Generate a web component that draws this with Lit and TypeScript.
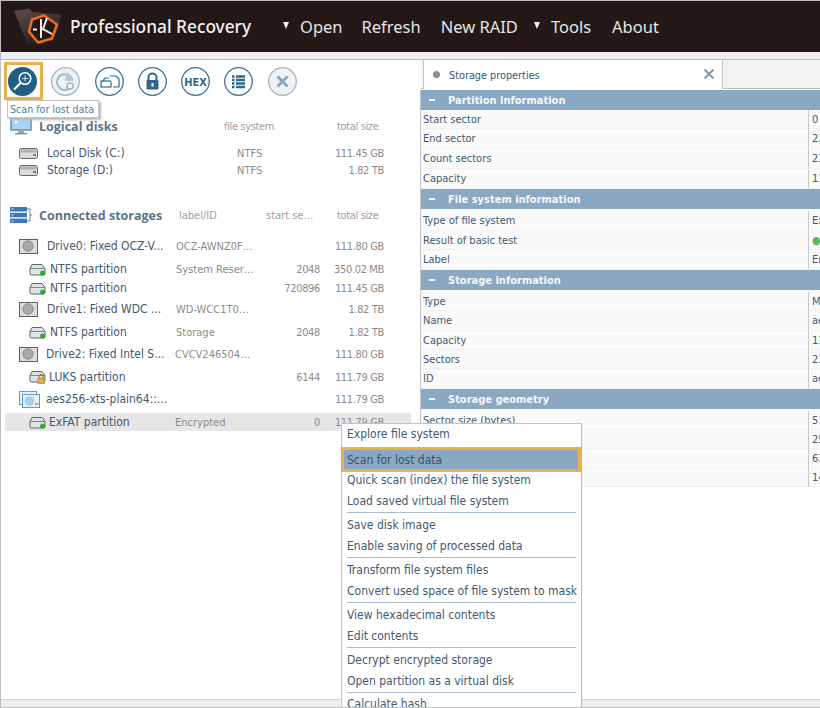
import { LitElement, html, css, svg } from "lit";
import { customElement } from "lit/decorators.js";

const hdd = svg`<svg width="19" height="11" viewBox="0 0 19 11"><rect x="0.5" y="0.5" width="18" height="10" rx="2" fill="#dcdcdc" stroke="#666"/><rect x="1.5" y="1.5" width="16" height="3" fill="#b0b0b0"/><rect x="14" y="6" width="3" height="2" fill="#22b14c"/></svg>`;
const drive = svg`<svg width="19" height="15" viewBox="0 0 19 15"><rect x="0.5" y="0.5" width="18" height="14" fill="#dcdcdc" stroke="#5f5f5f"/><circle cx="9" cy="7" r="5.2" fill="#a9a9a9" stroke="#8e8e8e"/></svg>`;
const part = svg`<svg width="17" height="13" viewBox="0 0 17 13"><path d="M3 1.5h10l3 4v5a1.5 1.5 0 0 1-1.500 1.500h-12a1.500 1.500 0 0 1-1.500-1.500v-5z" fill="#dfe3e6" stroke="#5e666c"/><rect x="1" y="5" width="15" height="1" fill="#7e868c"/><rect x="11.500" y="8" width="4" height="4" rx="1.500" fill="#16c60c" stroke="#0c7d08" stroke-width=".5"/></svg>`;
const lock = svg`<svg width="17" height="14" viewBox="0 0 17 14"><path d="M3 1.500h10l3 4v5a1.500 1.500 0 0 1-1.500 1.500h-12a1.500 1.500 0 0 1-1.500-1.500v-5z" fill="#dfe3e6" stroke="#5e666c"/><rect x="1" y="5" width="15" height="1" fill="#7e868c"/><path d="M10 8V6.500a2 2 0 0 1 4 0V8" fill="none" stroke="#8a6a30"/><rect x="8.500" y="8" width="7" height="6" rx="1" fill="#e0a94a" stroke="#9a7430" stroke-width=".5"/></svg>`;
const enc = svg`<svg width="21" height="17" viewBox="0 0 21 17"><rect x="0.500" y="0.500" width="17" height="13" fill="#e8f2fa" stroke="#5b9bd0"/><rect x="3.500" y="3.500" width="17" height="13" fill="#e8f2fa" stroke="#5b9bd0"/><circle cx="10.500" cy="10" r="4.800" fill="#a8d0ea"/><rect x="16" y="12" width="3.500" height="2" fill="#ef9a45"/></svg>`;

const icons: Record<string, unknown> = { hdd, drive, part, lock, enc };

const logical = [
  ["Local Disk (C:)", "NTFS", "111.45 GB", 8],
  ["Storage (D:)", "NTFS", "1.82 TB", -1],
];

const storages = [
  { k: "drive", n: "Drive0: Fixed OCZ-V...", l: "OCZ-AWNZ0F…", s: "", z: "111.80 GB", mt: 12 },
  { k: "part", n: "NTFS partition", l: "System Reser…", s: "2048", z: "350.02 MB", mt: 5 },
  { k: "part", n: "NTFS partition", l: "", s: "720896", z: "111.45 GB", mt: 1 },
  { k: "drive", n: "Drive1: Fixed WDC ...", l: "WD-WCC1T0…", s: "", z: "1.82 TB", mt: 3 },
  { k: "part", n: "NTFS partition", l: "Storage", s: "2048", z: "1.82 TB", mt: 5 },
  { k: "drive", n: "Drive2: Fixed Intel S...", l: "CVCV246504…", s: "", z: "111.80 GB", mt: 4, t: 1 },
  { k: "lock", n: "LUKS partition", l: "", s: "6144", z: "111.79 GB", mt: 5, t: 1 },
  { k: "enc", n: "aes256-xts-plain64::...", l: "", s: "", z: "111.79 GB", mt: 4, t: 1 },
  { k: "part", n: "ExFAT partition", l: "Encrypted", s: "0", z: "111.79 GB", mt: 5, t: 1, sel: 1 },
];

const sections: { t: string; h: number[]; p: number; rows: string[][] }[] = [
  { t: "Partition information", h: [19, 20, 20, 20], p: 0, rows: [["Start sector", "0"], ["End sector", "234420223"], ["Count sectors", "234420224"], ["Capacity", "111.79 GB"]] },
  { t: "File system information", h: [22, 19, 20], p: 2, rows: [["Type of file system", "ExFAT"], ["Result of basic test", "●"], ["Label", "Encrypted"]] },
  { t: "Storage information", h: [21, 20, 19, 19, 20], p: 2, rows: [["Type", "Mapped"], ["Name", "aes256"], ["Capacity", "111.79 GB"], ["Sectors", "234426368"], ["ID", "aes256"]] },
  { t: "Storage geometry", h: [21, 19, 19, 19], p: 2, rows: [["Sector size (bytes)", "512"], ["Sectors per track", "255"], ["Tracks per cylinder", "63"], ["Cylinders", "14592"]] },
];

const menu = [
  ["Explore file system"], ["Scan for lost data", "hi"], ["Quick scan (index) the file system"], ["Load saved virtual file system"], null,
  ["Save disk image"], ["Enable saving of processed data"], null,
  ["Transform file system files"], ["Convert used space of file system to mask"], null,
  ["View hexadecimal contents"], ["Edit contents"], null,
  ["Decrypt encrypted storage"], ["Open partition as a virtual disk"], null,
  ["Calculate hash"],
];

@customElement("app-root")
export class AppRoot extends LitElement {
  static styles = css`
    :host { display: block; width: 820px; height: 708px; position: relative; overflow: hidden; background: #fff;
      font-family: "DejaVu Sans Condensed", "Liberation Sans", sans-serif; font-size: 12px; color: #3f5a72; box-sizing: border-box; }
    .app { display: flex; flex-direction: column; height: 708px; box-sizing: border-box; border-top: 1px solid #bdbdbd; border-left: 1px solid #bdbdbd; }
    .header { height: 51px; flex: none; background: #231815; display: flex; align-items: center; position: relative; color: #e6e6e6; font-family: "Noto Sans", "Open Sans", sans-serif; font-size: 16.500px; }
    .logo { margin-left: 13px; flex: none; display: block; }
    .brand { margin-left: 6px; width: 197px; font-size: 17.300px; font-weight: 500; color: #f2f2f2; white-space: nowrap; }
    .nav { display: flex; align-items: center; white-space: nowrap; height: 100%; }
    .tri { width: 0; height: 0; border-left: 3.500px solid transparent; border-right: 3.500px solid transparent; border-top: 7px solid #f4f4f4; margin-top: -2px; }
    .strip { height: 7px; flex: none; background: #efefef; border-bottom: 1px solid #bcbcbc; }
    .body { flex: 1; display: flex; min-height: 0; }
    .left { width: 418px; flex: none; position: relative; }
    .toolbar { height: 56px; display: flex; align-items: flex-start; box-sizing: border-box; padding: 7px 0 0 7px; gap: 14.300px; position: relative; }
    .btn { width: 29px; height: 29px; flex: none; display: block; }
    .focus { position: absolute; left: 3px; top: 2px; width: 39px; height: 38px; box-sizing: border-box; border: 3px solid #e8b04e; }
    .tip { position: absolute; left: 6px; top: 40px; height: 18px; width: 92px; box-sizing: border-box; border: 1px solid #c4c4c4; background: #fff; color: #4a7ea3; font-size: 10.600px; line-height: 16px; padding-left: 2px; white-space: nowrap; box-shadow: 2px 2px 2px #bbb; z-index: 3; }
    .head { height: 20px; display: flex; align-items: center; position: relative; color: #a0a0a0; font-size: 11px; white-space: nowrap; }
    .head .ico { width: 38px; flex: none; padding-left: 9px; box-sizing: border-box; display: flex; }
    .head b { color: #5e7388; font-size: 12.500px; font-weight: bold; font-family: "Open Sans", "DejaVu Sans Condensed", sans-serif; }
    .sp { letter-spacing: -0.35px; }
    .row { display: grid; height: 18px; box-sizing: border-box; align-items: center; white-space: nowrap; margin-right: 8px; margin-left: 4px; }
    .row.st { grid-template-columns: 171px 86px 58px 64px; }
    .row.lg { grid-template-columns: 232px 60px 87px; }
    .row.sel { background: #e6e6e6; }
    .cell-n { display: flex; align-items: center; }
    .ic { flex: none; display: flex; justify-content: flex-start; }
    .n-drive .ic { margin-left: 14px; width: 28px; }
    .n-part .ic, .n-lock .ic { margin-left: 24px; width: 21px; }
    .n-enc .ic { margin-left: 14px; width: 28px; }
    .tight { margin-left: -1px; }
    .v { color: #8b8b8b; font-size: 11px; }
    .r { text-align: right; letter-spacing: -0.35px; }
    .right { flex: 1; min-width: 0; position: relative; overflow: hidden; }
    .tabs { height: 29px; display: flex; background: #f3f3f3; border-bottom: 1px solid #bcbcbc; box-sizing: border-box; margin-left: 2px; }
    .tab { width: 300px; height: 29px; margin-left: 2px; box-sizing: border-box; background: #fff; border: 1px solid #c4c4c4; border-top: 0; border-bottom: 0; display: flex; align-items: center; color: #2d5a80; font-size: 10.800px; padding: 1px 0 0 9px; position: relative; }
    .dot { width: 7px; height: 7px; border-radius: 50%; background: #8f8f8f; margin-right: 9px; margin-top: -1px; }
    .x { position: absolute; right: 7px; top: 8px; display: block; }
    .props { border-left: 1px solid #c4c4c4; margin-left: 1px; margin-top: 1px; }
    .sec { height: 20px; background: #8aa8c2; display: flex; align-items: center; color: #f5f8fb; font-weight: bold; font-size: 11px; white-space: nowrap; }
    .sec i { width: 6px; height: 2px; background: #f5f8fb; margin-left: 8px; margin-right: 13px; flex: none; }
    .pr { display: grid; grid-template-columns: 387px 1fr; background: #fafafa; border-bottom: 1px solid #f0f0f0; box-sizing: border-box; line-height: 19px; font-size: 11px; white-space: nowrap; }
    .pr span:first-child { padding-left: 2px; }
    .pr span:last-child { border-left: 1px solid #c8c8c8; padding-left: 3px; overflow: hidden; }
    .green { color: #5cb85c; }
    .foot { height: 9px; flex: none; background: #efefef; border-top: 1px solid #d4d4d4; border-bottom: 1px solid #c4c4c4; box-sizing: border-box; }
    .menu { position: absolute; left: 341px; top: 423px; width: 241px; height: 284px; box-sizing: border-box; background: #fff; border: 1px solid #c4c4c4; border-right: 1px solid #b8b8b8; border-bottom: 0; z-index: 5; padding-top: 1px; white-space: nowrap; clip-path: inset(0); }
    .mi { height: 21px; box-sizing: border-box; padding-top: 2px; line-height: 19px; padding-left: 5px; color: #3f5a72; }
    .mi:first-child { padding-top: 0; }
    .mi:last-child { padding-top: 1px; }
    .mi.hi { height: 25px; line-height: 21px; padding-top: 0; background: #8aa8c2; border: 3px solid #e8b04e; margin: 1px 0 -3px -1px; padding-left: 3px; position: relative; color: #34526b; }
    .sep { height: 1px; background: #a9bccd; margin: 1px 5px 1px 5px; }
  `;

  private btn(inner: unknown, off = false) {
    const c = off ? "#9db6c6" : "#3d7699";
    return html`<svg class="btn" viewBox="0 0 29 29"><circle cx="14.500" cy="14.500" r="13.800" fill=${off ? "#f0f1f2" : "#fff"} stroke=${c} stroke-width="1.300"/>${inner}</svg>`;
  }

  render() {
    const bg = "#2f6689";
    return html`<div class="app">
      <div class="header">
        <svg class="logo" width="50" height="38" viewBox="0 0 50 38">
          <defs><linearGradient id="f" x1="0" y1="0" x2="0.500" y2="1"><stop offset="0" stop-color="#5e4a47"/><stop offset=".55" stop-color="#3f3435"/><stop offset="1" stop-color="#231c1c"/></linearGradient></defs>
          <path d="M0 3 L15 0.500 L18 4 L47 6.500 L41 36 L14 37.500 Z" fill="url(#f)"/>
          <path d="M30 7.500 L43 16.500 L38 30.500 L24 34.500 L15 23.500 L18 11.500 Z" fill="#231815" stroke="#ee6c1e" stroke-width="2.600" stroke-linejoin="round"/>
          <path d="M19 21.500h4M27 11v19M33 10 L29 21 L38 26" fill="none" stroke="#f4efe8" stroke-width="2"/>
        </svg>
        <div class="brand">Professional Recovery</div>
        <div class="nav">
          <span class="tri" style="margin-left:16px"></span><span style="margin-left:11px">Open</span>
          <span style="margin-left:19px">Refresh</span>
          <span style="margin-left:20px">New RAID</span>
          <span class="tri" style="margin-left:16px"></span><span style="margin-left:11px">Tools</span>
          <span style="margin-left:21px">About</span>
        </div>
      </div>
      <div class="strip"></div>
      <div class="body">
        <div class="left">
          <div class="toolbar">
            <svg class="btn" viewBox="0 0 29 29"><circle cx="14.500" cy="14.500" r="14.500" fill="#1f5f86"/><circle cx="17" cy="11.500" r="5.800" fill="none" stroke="#fff" stroke-width="1.500"/><path d="M13 15.500 L6 22.500" stroke="#fff" stroke-width="2.200"/><path d="M17 8.500v6M14 11.500h6" stroke="#fff" stroke-width=".8"/></svg>
            ${this.btn(svg`<path d="M14 7 A8 8 0 1 0 21 19" fill="none" stroke="#9db6c6" stroke-width="1.800"/><path d="M14.500 6v8h8a8 8 0 0 0-8-8z" fill="#b5c8d5"/><circle cx="19" cy="19" r="3" fill="#fff" stroke="#9db6c6" stroke-width="1.500"/><path d="M16.500 21.500l-2 2" stroke="#9db6c6" stroke-width="1.500"/>`, true)}
            ${this.btn(svg`<rect x="6" y="14" width="10" height="6" fill="none" stroke="${bg}" stroke-width="1.200"/><path d="M8 14l2-3h4" fill="none" stroke="${bg}" stroke-width="1.200"/><path d="M15 9h6l3 3v8h-6" fill="#fff" stroke="${bg}" stroke-width="1.200"/>`)}
            ${this.btn(svg`<path d="M10.500 13V10.500a4 4 0 0 1 8 0V13" fill="none" stroke="${bg}" stroke-width="2"/><rect x="8.500" y="13" width="12" height="9.500" rx="1" fill="${bg}"/><rect x="13.500" y="16" width="2" height="3.500" fill="#fff"/>`)}
            ${this.btn(svg`<text x="14.500" y="18.500" text-anchor="middle" font-family="DejaVu Sans, sans-serif" font-weight="bold" font-size="9.800" fill="${bg}">HEX</text>`)}
            ${this.btn(svg`<path d="M8 9.500h2.500M8 13h2.500M8 16.500h2.500M8 20h2.500" stroke="${bg}" stroke-width="2.400"/><path d="M12 9.500h9M12 13h9M12 16.500h9M12 20h9" stroke="${bg}" stroke-width="2.400"/>`)}
            ${this.btn(svg`<path d="M9.500 9.500l10 10M19.500 9.500l-10 10" stroke="#86a5bb" stroke-width="2.800"/>`, true)}
            <div class="focus"></div>
            <div class="tip">Scan for lost data</div>
          </div>
          <div class="head">
            <span class="ico"><svg width="22" height="20" viewBox="0 0 22 20"><rect x="1" y="1" width="20" height="13" fill="#a9d3f2" stroke="#7f93a5" stroke-width="1.600"/><path d="M5 4l3 2-3 2z" fill="#fff"/><rect x="8" y="15" width="6" height="2" fill="#9aa9b6"/><rect x="5" y="17" width="12" height="1.500" fill="#7f93a5"/></svg></span>
            <b style="width:185px">Logical disks</b><span class="sp" style="width:113px">file system</span><span class="sp">total size</span>
          </div>
          ${logical.map((r) => html`<div class="row lg" style="margin-top:${r[3]}px">
            <div class="cell-n n-drive"><span class="ic">${icons.hdd}</span><span>${r[0]}</span></div>
            <span class="v">${r[1]}</span><span class="v r">${r[2]}</span></div>`)}
          <div class="head" style="margin-top:26px">
            <span class="ico"><svg width="22" height="18" viewBox="0 0 22 18"><rect x="0" y="1" width="17" height="4.500" fill="#3f79b5"/><rect x="0" y="6.800" width="17" height="4.500" fill="#3f79b5"/><rect x="0" y="12.600" width="17" height="4.500" fill="#3f79b5"/><path d="M1.500 3h2M1.500 9h2M1.500 15h2" stroke="#dcecf8"/><path d="M17 3h3v12h-3M20 9h2" fill="none" stroke="#6a7f90"/></svg></span>
            <b style="width:140px">Connected storages</b><span style="width:87px">label/ID</span><span style="width:71px">start se…</span><span class="sp">total size</span>
          </div>
          ${storages.map((r) => html`<div class="row st ${r.sel ? "sel" : ""}" style="margin-top:${r.mt}px">
            <div class="cell-n n-${r.k}"><span class="ic">${icons[r.k]}</span><span class=${r.t ? "tight" : ""}>${r.n}</span></div>
            <span class="v ${r.t ? "tight" : ""}">${r.l}</span><span class="v r">${r.s}</span><span class="v r">${r.z}</span></div>`)}
        </div>
        <div class="right">
          <div class="tabs"><div class="tab"><span class="dot"></span>Storage properties
            <svg class="x" width="12" height="12" viewBox="0 0 12 12"><path d="M1.500 1.500l9 9M10.500 1.500l-9 9" stroke="#7e98ad" stroke-width="1.900"/></svg></div></div>
          <div class="props">
            ${sections.map((s) => html`<div class="sec"><i></i>${s.t}</div>
              ${s.rows.map((r, i) => html`<div class="pr" style="height:${s.h[i]}px;padding-top:${i === 0 ? s.p : 0}px"><span>${r[0]}</span><span class=${r[1] === "●" ? "green" : ""}>${r[1]}</span></div>`)}`)}
          </div>
        </div>
      </div>
      <div class="foot"></div>
    </div>
    <div class="menu">
      ${menu.map((m) => m ? html`<div class="mi ${m[1] ?? ""}">${m[0]}</div>` : html`<div class="sep"></div>`)}
    </div>`;
  }
}
